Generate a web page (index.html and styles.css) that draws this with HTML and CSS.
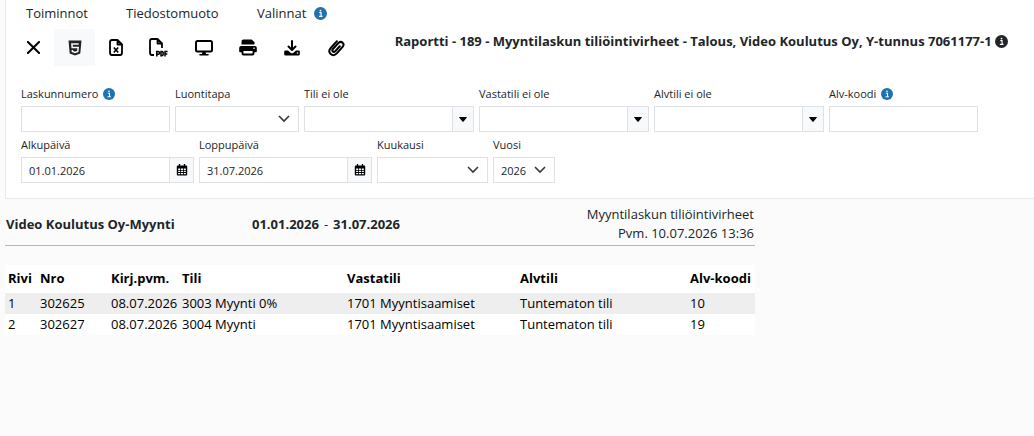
FILE: index.html
```html
<!DOCTYPE html>
<html lang="fi">
<head>
  <meta charset="UTF-8">
  <meta name="viewport" content="width=device-width, initial-scale=1.0">
  <title>Raportti - 189</title>
  <link rel="stylesheet" href="styles.css">
</head>
<body>
  <svg class="sprite">
    <symbol id="info" viewBox="0 0 16 16">
      <circle cx="8" cy="8" r="8" fill="currentColor"/>
      <path d="M6.5 7h2.2v4.6M6 11.6h4.5" fill="none" stroke="#fff" stroke-width="1.4"/>
      <circle cx="8" cy="4.4" r="1.1" fill="#fff"/>
    </symbol>
    <symbol id="caret" viewBox="0 0 8 5">
      <path d="M.4 0h7.2q.6 0 .2.6L4.6 4.5q-.6.6-1.2 0L.2.6Q-.2 0 .4 0z"/>
    </symbol>
    <symbol id="calendar" viewBox="0 0 12 12">
      <path d="M3.5.5v2M8.5.5v2" stroke="#000" stroke-width="1.4" stroke-linecap="round"/>
      <path d="M1.8 1.6h8.4q1 0 1 1v7.8q0 1-1 1H1.8q-1 0-1-1V2.6q0-1 1-1z"/>
      <path d="M2.2 4.6h2v1.3h-2zM5 4.6h2v1.3H5zM7.8 4.6h2v1.3h-2zM2.2 6.8h2v1.3h-2zM5 6.8h2v1.3H5zM7.8 6.8h2v1.3h-2zM2.2 9h2v1.2h-2zM5 9h2v1.2H5zM7.8 9h2v1.2h-2z" fill="#fff"/>
    </symbol>
  </svg>

  <div class="panel">
    <nav class="menu">
      <a href="#" class="menu-actions">Toiminnot</a>
      <a href="#" class="menu-format">Tiedostomuoto</a>
      <a href="#">Valinnat <svg class="info"><use href="#info"/></svg></a>
    </nav>

    <div class="top">
      <div class="toolbar">
        <button type="button" aria-label="Sulje">
          <svg width="13" height="13" viewBox="0 0 14 14"><path d="M1 1l12 12M13 1L1 13" fill="none" stroke="#000" stroke-width="2.2" stroke-linecap="round"/></svg>
        </button>
        <button type="button" class="active" aria-label="HTML">
          <svg width="14" height="16" viewBox="0 0 14 16"><path d="M.5.5h13l-1.200 13L7 15.500l-5.300-2z" fill="#212529"/><path d="M10.700 4H3.900l.3 3.500h6l-.4 4L7 12.400l-2.600-.9-.1-1.500" fill="none" stroke="#f8f9fa" stroke-width="1.500"/></svg>
        </button>
        <button type="button" aria-label="Excel">
          <svg width="14" height="17" viewBox="0 0 14 17"><path d="M3 1h5.500L13 5.500V14q0 2-2 2H3q-2 0-2-2V3q0-2 2-2zM8.500 1v4.500H13" fill="none" stroke="#000" stroke-width="1.800" stroke-linejoin="round"/><path d="M4.800 8.500l4.400 5M9.200 8.500l-4.400 5" stroke="#000" stroke-width="1.700"/></svg>
        </button>
        <button type="button" class="wide" aria-label="PDF">
          <svg width="19" height="19" viewBox="0 0 19 19"><path d="M5 17H3q-2 0-2-2V3q0-2 2-2h5.500L13 5.500V10M8.500 1v4.500H13" fill="none" stroke="#000" stroke-width="1.800" stroke-linejoin="round"/><path d="M7.800 18.500v-5h1.500q1.200 0 1.200 1.400T9.300 16.300H7.800M12 13.500v4.300h.8q1.400 0 1.400-2.200t-1.400-2.100zM16 18.500v-5h2.600M16 15.900h2.300" fill="none" stroke="#000" stroke-width="1.500"/></svg>
        </button>
        <button type="button" class="wide" aria-label="Näyttö">
          <svg width="18" height="16" viewBox="0 0 18 16"><rect x="1" y="1" width="16" height="10.500" rx="1.500" fill="none" stroke="#000" stroke-width="2"/><path d="M7.500 12h3l.6 2H13q.8 0 .8.8t-.8.8H5q-.8 0-.8-.8T5 14h1.900z"/></svg>
        </button>
        <button type="button" class="medium" aria-label="Tulosta">
          <svg width="18" height="17" viewBox="0 0 18 17"><path d="M2.500 5.500V2.500Q2.500.5 4.500.5h8L15.500 3v2.500zM2 7h14q1.800 0 1.800 2v3.500q0 .8-.8.8H1q-.8 0-.8-.8V9Q.2 7 2 7z"/><path d="M3.500 11h11v3.500q0 1-1 1h-9q-1 0-1-1z" fill="#fff" stroke="#000" stroke-width="1.900"/><circle cx="15" cy="9.200" r=".8" fill="#fff"/></svg>
        </button>
        <button type="button" class="medium" aria-label="Lataa">
          <svg width="16" height="16" viewBox="0 0 16 16"><path d="M8 1v8.500M4.500 6.500L8 10l3.500-3.500" fill="none" stroke="#000" stroke-width="2" stroke-linecap="round" stroke-linejoin="round"/><path d="M1.500 10.500H4l2.600 2.300q1.400 1 2.800 0L12 10.500h2.500q1.300 0 1.300 1.300v2.500q0 1.300-1.300 1.300h-13Q.2 15.600.2 14.300v-2.500q0-1.300 1.300-1.300z"/><circle cx="13.500" cy="13" r=".8" fill="#fff"/></svg>
        </button>
        <button type="button" class="medium" aria-label="Liitteet">
          <svg width="17" height="18" viewBox="0 0 17 18"><path d="M11.800 7.300l-4.600 4.900c-1.700 1.700-3.900-.4-2.300-2.200l5.500-6c3-2.900 6.800.8 4.200 3.800L8.800 14.400c-4.200 4.300-9.900-.8-6.200-5.300L8.900 2.200" fill="none" stroke="#000" stroke-width="2" stroke-linecap="round"/></svg>
        </button>
      </div>
      <h1 class="title">Raportti - 189 - Myyntilaskun tiliöintivirheet - Talous, Video Koulutus Oy, Y-tunnus 7061177-1 <svg class="info dark"><use href="#info"/></svg></h1>
    </div>

    <form class="filters">
      <div class="filter-row">
        <div class="field">
          <label for="laskunnumero">Laskunnumero <svg class="info small"><use href="#info"/></svg></label>
          <input type="text" id="laskunnumero">
        </div>
        <div class="field">
          <label for="luontitapa">Luontitapa</label>
          <div class="select select-method"><select id="luontitapa"><option></option></select><svg class="chevron" viewBox="0 0 12 8"><path d="M1 1l5 5 5-5"/></svg></div>
        </div>
        <div class="field">
          <label for="tili">Tili ei ole</label>
          <div class="group"><input type="text" id="tili"><button type="button" aria-label="Valitse tili"><svg class="caret"><use href="#caret"/></svg></button></div>
        </div>
        <div class="field">
          <label for="vastatili">Vastatili ei ole</label>
          <div class="group"><input type="text" id="vastatili"><button type="button" aria-label="Valitse vastatili"><svg class="caret"><use href="#caret"/></svg></button></div>
        </div>
        <div class="field">
          <label for="alvtili">Alvtili ei ole</label>
          <div class="group"><input type="text" id="alvtili"><button type="button" aria-label="Valitse alvtili"><svg class="caret"><use href="#caret"/></svg></button></div>
        </div>
        <div class="field">
          <label for="alvkoodi">Alv-koodi <svg class="info small"><use href="#info"/></svg></label>
          <input type="text" id="alvkoodi">
        </div>
      </div>
      <div class="filter-row">
        <div class="field">
          <label for="alkupaiva">Alkupäivä</label>
          <div class="group date"><input type="text" id="alkupaiva" value="01.01.2026"><button type="button" aria-label="Valitse alkupäivä"><svg class="calendar"><use href="#calendar"/></svg></button></div>
        </div>
        <div class="field">
          <label for="loppupaiva">Loppupäivä</label>
          <div class="group date"><input type="text" id="loppupaiva" value="31.07.2026"><button type="button" aria-label="Valitse loppupäivä"><svg class="calendar"><use href="#calendar"/></svg></button></div>
        </div>
        <div class="field">
          <label for="kuukausi">Kuukausi</label>
          <div class="select select-month"><select id="kuukausi"><option></option></select><svg class="chevron" viewBox="0 0 12 8"><path d="M1 1l5 5 5-5"/></svg></div>
        </div>
        <div class="field">
          <label for="vuosi">Vuosi</label>
          <div class="select select-year"><select id="vuosi"><option>2026</option></select><svg class="chevron" viewBox="0 0 12 8"><path d="M1 1l5 5 5-5"/></svg></div>
        </div>
      </div>
    </form>
  </div>

  <div class="report">
    <div class="report-header">
      <strong>Video Koulutus Oy-Myynti</strong>
      <div class="period"><strong>01.01.2026</strong><span>-</span><strong>31.07.2026</strong></div>
      <div class="report-info">Myyntilaskun tiliöintivirheet<br>Pvm. 10.07.2026 13:36</div>
    </div>

    <table>
      <colgroup>
        <col class="col-row"><col class="col-nro"><col class="col-date"><col class="col-account"><col class="col-contra"><col class="col-vat"><col>
      </colgroup>
      <thead>
        <tr><th>Rivi</th><th>Nro</th><th>Kirj.pvm.</th><th>Tili</th><th>Vastatili</th><th>Alvtili</th><th>Alv-koodi</th></tr>
      </thead>
      <tbody>
        <tr><td>1</td><td>302625</td><td>08.07.2026</td><td>3003 Myynti 0%</td><td>1701 Myyntisaamiset</td><td>Tuntematon tili</td><td>10</td></tr>
        <tr><td>2</td><td>302627</td><td>08.07.2026</td><td>3004 Myynti</td><td>1701 Myyntisaamiset</td><td>Tuntematon tili</td><td>19</td></tr>
      </tbody>
    </table>
  </div>
</body>
</html>
```
FILE: styles.css
```css
* {
  box-sizing: border-box;
}
body {
  margin: 0;
  padding-left: 5px;
  background-color: #fbfbfb;
  color: #212529;
  font-family: "Open Sans", "Noto Sans", sans-serif;
  font-size: 13px;
  line-height: 19px;
}
.sprite {
  display: none;
}
.panel {
  padding: 4px 0 15px 15px;
  background: #fff;
  border-left: 1px solid #e9e9e9;
  border-bottom: 1px solid #e9e9e9;
}
.menu {
  display: flex;
  padding-left: 5px;
}
.menu a {
  color: #212529;
  text-decoration: none;
}
.menu-actions {
  width: 100px;
}
.menu-format {
  width: 131px;
}
.info {
  width: 13px;
  height: 13px;
  margin-left: 4px;
  color: #1f72b0;
  vertical-align: -2px;
}
.info.small {
  width: 12px;
  height: 12px;
  margin-left: 2px;
}
.info.dark {
  margin-left: 0;
  color: #212529;
}
.top {
  display: flex;
  align-items: flex-start;
  justify-content: space-between;
  margin-top: 6px;
  padding-right: 26px;
}
.toolbar {
  display: flex;
  margin-left: -8px;
}
.toolbar button {
  display: flex;
  align-items: center;
  justify-content: center;
  width: 41px;
  height: 37px;
  padding: 0;
  border: none;
  background: none;
  cursor: pointer;
}
.toolbar .active {
  background-color: #f8f9fa;
}
.toolbar .wide {
  width: 45px;
}
.toolbar .medium {
  width: 44px;
}
.title {
  margin: 3px 0 0;
  font-size: 13px;
  font-weight: bold;
}
.filters {
  margin-top: 20px;
}
.filter-row {
  display: flex;
  flex-wrap: wrap;
  gap: 5px;
}
.filter-row + .filter-row {
  margin-top: 5px;
}
.field label {
  display: block;
  height: 20px;
  font-size: 11px;
  line-height: 16px;
}
input,
select {
  display: block;
  width: 149px;
  height: 26px;
  padding: 0 7px;
  border: 1px solid #dee2e6;
  border-radius: 0;
  background: #fff;
  color: #212529;
  font-family: inherit;
  font-size: 11px;
}
.group {
  display: flex;
}
.group button {
  display: flex;
  align-items: center;
  justify-content: center;
  width: 21px;
  height: 26px;
  padding: 0;
  border: 1px solid #dee2e6;
  border-left: none;
  background: #f8f9fa;
}
.date button {
  width: 24px;
}
.caret {
  width: 8px;
  height: 5px;
}
.calendar {
  width: 12px;
  height: 12px;
}
.select {
  display: grid;
  align-items: center;
}
.select select,
.chevron {
  grid-area: 1 / 1;
}
.select select {
  appearance: none;
  width: 100%;
}
.chevron {
  justify-self: end;
  width: 12px;
  height: 8px;
  margin-right: 9px;
  pointer-events: none;
  fill: none;
  stroke: #343a40;
  stroke-width: 1.6;
}
.select-method {
  width: 124px;
}
.select-month {
  width: 111px;
}
.select-year {
  width: 62px;
}
.report {
  width: 750px;
  max-width: 100%;
  padding-top: 6px;
}
.report-header {
  display: grid;
  grid-template-columns: 246px 1fr auto;
  align-items: center;
  padding: 0 1px 2px;
  border-bottom: 1px solid #b5b5b5;
}
.period {
  display: flex;
  gap: 5px;
}
.report-info {
  text-align: right;
}
table {
  width: 100%;
  margin-top: 19px;
  border-collapse: collapse;
  table-layout: fixed;
  background: #fff;
  color: #000;
}
th,
td {
  height: 21px;
  padding: 0 3px;
  text-align: left;
  white-space: nowrap;
}
th {
  height: 28px;
  padding-bottom: 2px;
}
tbody tr:nth-child(odd) {
  background-color: #eee;
}
.col-row {
  width: 32px;
}
.col-nro,
.col-date {
  width: 71px;
}
.col-account {
  width: 165px;
}
.col-contra {
  width: 173px;
}
.col-vat {
  width: 170px;
}
```
